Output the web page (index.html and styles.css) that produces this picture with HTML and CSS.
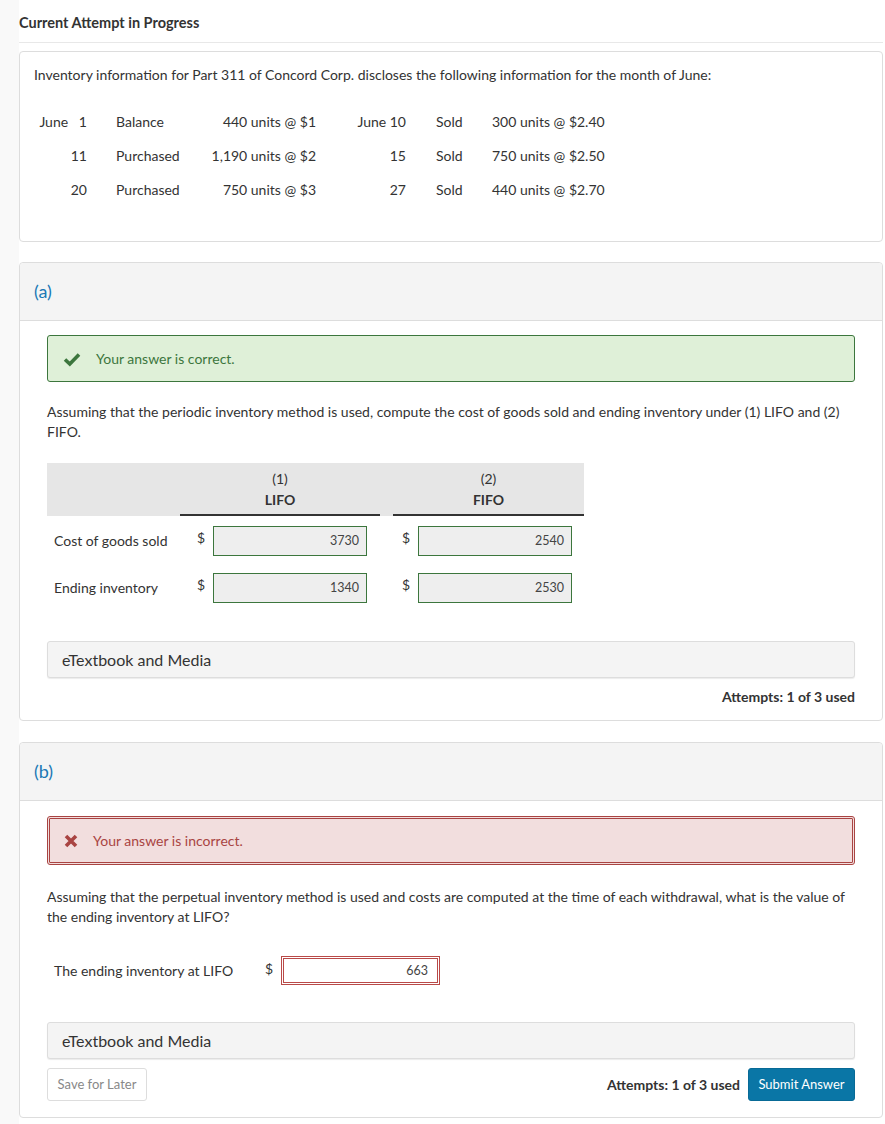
FILE: index.html
```html
<!DOCTYPE html>
<html>
<head>
<meta charset="utf-8">
<link rel="stylesheet" href="styles.css">
</head>
<body>
<div class="page">
  <div class="title">Current Attempt in Progress</div>

  <div class="card intro">
    <p class="lead">Inventory information for Part 311 of Concord Corp. discloses the following information for the month of June:</p>
    <div class="inv">
      <div class="c1">June&nbsp;&nbsp; 1</div><div class="c2">Balance</div><div class="c3">440 units @ $1</div><div class="c4">June 10</div><div class="c5">Sold</div><div class="c6">300 units @ $2.40</div>
      <div class="c1">11</div><div class="c2">Purchased</div><div class="c3">1,190 units @ $2</div><div class="c4">15</div><div class="c5">Sold</div><div class="c6">750 units @ $2.50</div>
      <div class="c1">20</div><div class="c2">Purchased</div><div class="c3">750 units @ $3</div><div class="c4">27</div><div class="c5">Sold</div><div class="c6">440 units @ $2.70</div>
    </div>
  </div>

  <div class="card part">
    <div class="part-head">(a)</div>
    <div class="part-body">
      <div class="alert ok">
        <svg class="ico" width="18" height="16" viewBox="0 0 18 16"><path d="M2 8.5 L6.8 13 L16 3.5" fill="none" stroke="#3c763d" stroke-width="3.6"/></svg>
        <span>Your answer is correct.</span>
      </div>
      <p class="q">Assuming that the periodic inventory method is used, compute the cost of goods sold and ending inventory under (1) LIFO and (2) FIFO.</p>
      <div class="grid">
        <div class="gh gh-l"></div>
        <div class="gh gh-c under">(1)<br><b>LIFO</b></div>
        <div class="gh"></div>
        <div class="gh gh-c under">(2)<br><b>FIFO</b></div>

        <div class="gl">Cost of goods sold</div>
        <div class="gv"><span class="dol">$</span><span class="inp good">3730</span></div>
        <div></div>
        <div class="gv fifo"><span class="dol">$</span><span class="inp good">2540</span></div>

        <div class="gl">Ending inventory</div>
        <div class="gv"><span class="dol">$</span><span class="inp good">1340</span></div>
        <div></div>
        <div class="gv fifo"><span class="dol">$</span><span class="inp good">2530</span></div>
      </div>
      <div class="media">eTextbook and Media</div>
      <div class="attempts">Attempts: 1 of 3 used</div>
    </div>
  </div>

  <div class="card part">
    <div class="part-head">(b)</div>
    <div class="part-body pb">
      <div class="alert bad">
        <svg class="ico x" width="16" height="16" viewBox="0 0 16 16"><path d="M3 3 L13 13 M13 3 L3 13" fill="none" stroke="#a94442" stroke-width="3.6"/></svg>
        <span>Your answer is incorrect.</span>
      </div>
      <p class="q">Assuming that the perpetual inventory method is used and costs are computed at the time of each withdrawal, what is the value of the ending inventory at LIFO?</p>
      <div class="single">
        <span class="sl">The ending inventory at LIFO</span>
        <span class="dol">$</span><span class="inp badin">663</span>
      </div>
      <div class="media m2">eTextbook and Media</div>
      <div class="foot">
        <span class="btn save">Save for Later</span>
        <span class="spacer"></span>
        <span class="att2">Attempts: 1 of 3 used</span>
        <span class="btn submit">Submit Answer</span>
      </div>
    </div>
  </div>
</div>
</body>
</html>
```

FILE: styles.css
```css
* { box-sizing: border-box; }
html, body { margin: 0; padding: 0; }
body {
  background: #f9f9f9;
  font-family: Lato, "Open Sans", "Liberation Sans", sans-serif;
  color: #333;
  font-size: 14px;
}
.page {
  margin-left: 19px;
  background: #fff;
  min-height: 1124px;
  padding-right: 2px;
  padding-bottom: 6px;
}
.title {
  font-weight: bold;
  font-size: 14.5px;
  line-height: 18px;
  padding-top: 14px;
  padding-bottom: 10px;
  border-bottom: 1px solid #e8e8e8;
  margin-bottom: 8px;
  color: #333;
}
.card {
  border: 1px solid #ddd;
  border-radius: 4px;
  background: #fff;
}
.intro {
  padding: 13px 14px 33px;
  height: 191px;
}
.lead { margin: 0; line-height: 20px; }
.inv {
  display: grid;
  grid-template-columns: 53px 96px 133px 90px 86px auto;
  margin-top: 20px;
}
.inv > div { line-height: 34px; white-space: nowrap; }
.c1, .c3, .c4 { text-align: right; }
.c2 { padding-left: 29px; }
.c5 { padding-left: 30px; }
.part { margin-top: 20px; }
.part + .part { margin-top: 21px; }
.part-head {
  background: #f4f4f4;
  border-bottom: 1px solid #ddd;
  height: 58px;
  padding-left: 14px;
  line-height: 57px;
  font-size: 18px;
  color: #1a78b4;
  border-radius: 4px 4px 0 0;
}
.part-body { padding: 14px 27px 13px; }
.part-body.pb { padding-top: 15px; padding-bottom: 14px; }
.alert {
  display: flex;
  align-items: center;
  border-radius: 3px;
}
.alert.ok {
  height: 47px;
  background: #dff0d8;
  border: 1px solid #3c763d;
  color: #3c763d;
  padding-left: 15px;
}
.alert.ok .ico { margin-right: 15px; }
.alert.bad {
  height: 49px;
  background: #f2dede;
  border: 3px double #a94442;
  color: #a94442;
  padding-left: 13px;
}
.alert.bad .ico { margin-right: 14px; }
.q { margin: 20px 0 0; line-height: 20px; }
.pb .q { margin-top: 22px; }
.grid {
  display: grid;
  grid-template-columns: 133px 200px 13px 191px;
  margin-top: 21px;
}
.gh {
  background: #e6e6e6;
  height: 53px;
}
.gh-c {
  text-align: center;
  padding-top: 5px;
  line-height: 21px;
}
.gh-c b { font-weight: bold; }
.under { border-bottom: 2px solid #333; }
.gl { line-height: 20px; padding-left: 7px; padding-top: 15px; height: 47px; }
.gv { display: flex; align-items: flex-start; padding-top: 10px; padding-left: 17px; height: 47px; }
.gv.fifo { padding-left: 9px; }
.dol { width: 16px; line-height: 20px; padding-top: 2px; }
.inp {
  display: block;
  width: 154px;
  height: 30px;
  line-height: 28px;
  text-align: right;
  padding-right: 7px;
  font-size: 12.5px;
  color: #444;
}
.inp.good { background: #eee; border: 1px solid #3c763d; }
.media {
  margin-top: 31px;
  height: 37px;
  background: #f4f4f4;
  border: 1px solid #ddd;
  border-radius: 3px;
  box-shadow: 0 1px 1px rgba(0,0,0,0.08);
  font-size: 16px;
  line-height: 35px;
  padding-left: 14px;
}
.attempts {
  text-align: right;
  font-weight: bold;
  line-height: 20px;
  margin-top: 9px;
}
.single {
  display: flex;
  align-items: flex-start;
  margin-top: 29px;
}
.sl { padding-left: 7px; line-height: 20px; padding-top: 5px; width: 218px; }
.single .dol { width: 16px; padding-top: 3px; }
.inp.badin {
  width: 159px;
  height: 29px;
  line-height: 23px;
  border: 3px double #b94a48;
  background: #fff;
  padding-right: 9px;
}
.media.m2 { margin-top: 37px; }
.foot {
  display: flex;
  align-items: center;
  margin-top: 9px;
  padding-bottom: 2px;
}
.spacer { flex: 1; }
.btn {
  display: inline-block;
  height: 33px;
  line-height: 31px;
  border-radius: 3px;
  font-size: 13px;
  text-align: center;
}
.save {
  width: 100px;
  border: 1px solid #ddd;
  color: #888;
  background: #fff;
}
.att2 { font-weight: bold; margin-right: 8px; }
.submit {
  width: 107px;
  background: #0a76a6;
  color: #fff;
  border: 1px solid #086a96;
}
```
